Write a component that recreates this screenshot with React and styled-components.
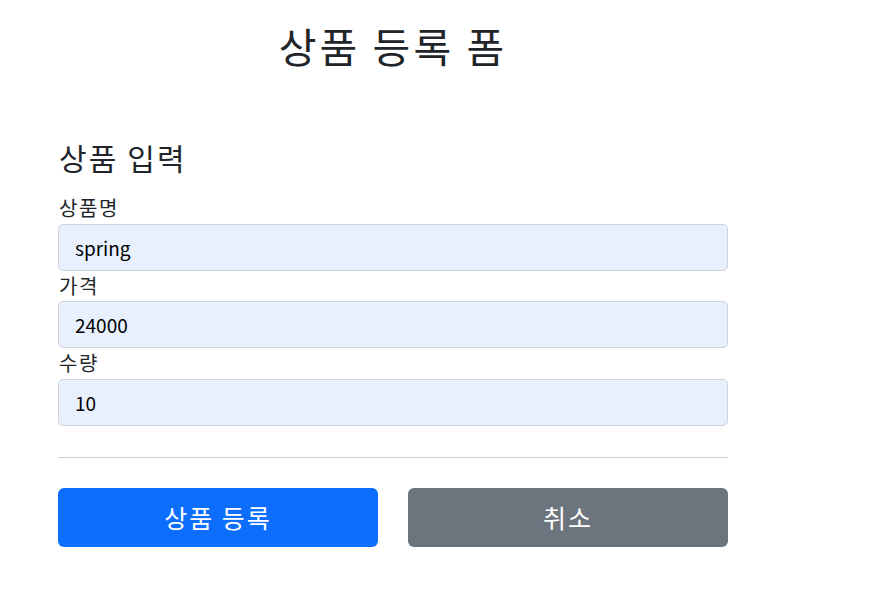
import React from "react";
import styled, { createGlobalStyle } from "styled-components";

const GlobalStyle = createGlobalStyle`
  * { box-sizing: border-box; }
  body {
    margin: 0;
    background: #fff;
    color: #212529;
    font-family: "Noto Sans CJK KR", "Noto Sans", sans-serif;
  }
`;

const Container = styled.div`
  width: 670px;
  margin-left: 58px;
  padding-top: 21px;
`;

const Header = styled.div`
  text-align: center;
`;

const Title = styled.h2`
  margin: 0;
  font-size: 41px;
  line-height: 48px;
  font-weight: 400;
  letter-spacing: 0.075em;
`;

const SectionTitle = styled.h4`
  margin: 70px 0 18px 1px;
  font-size: 30px;
  line-height: 36px;
  font-weight: 400;
  letter-spacing: 0.07em;
`;

const Field = styled.div`
  display: flex;
  flex-direction: column;
`;

const Label = styled.label`
  font-size: 20px;
  line-height: 30.5px;
  letter-spacing: 0.08em;
  padding-left: 1px;
`;

const Input = styled.input`
  height: 47px;
  width: 100%;
  padding: 0 16px;
  font-family: "Noto Sans CJK KR", "Noto Sans", sans-serif;
  font-size: 19px;
  color: #000;
  background: #e8f0fe;
  border: 1px solid #ced4da;
  border-radius: 5px;
  outline: none;
`;

const Divider = styled.hr`
  margin: 31px 0 30px;
  border: 0;
  border-top: 1px solid #cbcbcb;
`;

const ButtonRow = styled.div`
  display: grid;
  grid-template-columns: 1fr 1fr;
  gap: 30px;
`;

const Button = styled.button`
  height: 59px;
  border: 0;
  border-radius: 6px;
  font-family: inherit;
  font-size: 25px;
  letter-spacing: 0.08em;
  color: #fff;
  background: ${(p) => (p.$variant === "secondary" ? "#6c757d" : "#0d6efd")};
  cursor: pointer;
`;

const fields = [
  { label: "상품명", value: "spring" },
  { label: "가격", value: "24000" },
  { label: "수량", value: "10" },
];

export default function App() {
  return (
    <>
      <GlobalStyle />
      <Container>
        <Header>
          <Title>상품 등록 폼</Title>
        </Header>
        <SectionTitle>상품 입력</SectionTitle>
        <form onSubmit={(e) => e.preventDefault()}>
          {fields.map((f) => (
            <Field key={f.label}>
              <Label>{f.label}</Label>
              <Input type="text" defaultValue={f.value} />
            </Field>
          ))}
          <Divider />
          <ButtonRow>
            <Button type="submit">상품 등록</Button>
            <Button type="button" $variant="secondary">취소</Button>
          </ButtonRow>
        </form>
      </Container>
    </>
  );
}
